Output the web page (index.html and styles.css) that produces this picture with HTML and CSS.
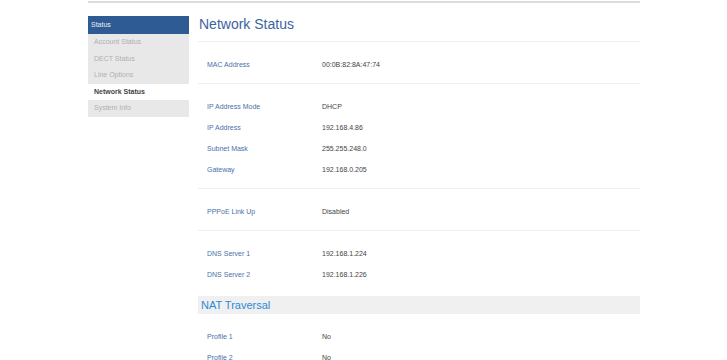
FILE: index.html
```html
<!DOCTYPE html>
<html lang="en">
<head>
  <meta charset="UTF-8" />
  <meta name="viewport" content="width=device-width, initial-scale=1.0" />
  <title>Network Status</title>
  <link rel="stylesheet" href="styles.css">
</head>
<body>
  <div class="page">
    <div class="menu">
      <div class="menu-head">Status</div>
      <div class="menu-item">Account Status</div>
      <div class="menu-item">DECT Status</div>
      <div class="menu-item">Line Options</div>
      <div class="menu-item active">Network Status</div>
      <div class="menu-item">System Info</div>
    </div>

    <div class="main">
      <h2>Network Status</h2>

      <div class="block">
        <div class="row"><span class="key">MAC Address</span><span class="val">00:0B:82:8A:47:74</span></div>
      </div>

      <div class="block">
        <div class="row"><span class="key">IP Address Mode</span><span class="val">DHCP</span></div>
        <div class="row"><span class="key">IP Address</span><span class="val">192.168.4.86</span></div>
        <div class="row"><span class="key">Subnet Mask</span><span class="val">255.255.248.0</span></div>
        <div class="row"><span class="key">Gateway</span><span class="val">192.168.0.205</span></div>
      </div>

      <div class="block">
        <div class="row"><span class="key">PPPoE Link Up</span><span class="val">Disabled</span></div>
      </div>

      <div class="block last">
        <div class="row"><span class="key">DNS Server 1</span><span class="val">192.168.1.224</span></div>
        <div class="row"><span class="key">DNS Server 2</span><span class="val">192.168.1.226</span></div>
      </div>

      <h3>NAT Traversal</h3>

      <div class="block plain">
        <div class="row"><span class="key">Profile 1</span><span class="val">No</span></div>
        <div class="row"><span class="key">Profile 2</span><span class="val">No</span></div>
        <div class="row"><span class="key">Profile 3</span><span class="val">No</span></div>
      </div>
    </div>
  </div>
</body>
</html>
```

FILE: styles.css
```css
body {
  margin: 0;
  font-family: "Liberation Sans", Arial, sans-serif;
  background: #fff;
  color: #444;
}
.page {
  width: 552px;
  margin: 1px 0 0 88px;
  border-top: 2px solid #dcdcdc;
  display: flex;
  gap: 9px;
  align-items: flex-start;
}
.menu {
  width: 101px;
  margin-top: 13px;
  font-size: 7px;
}
.menu-head {
  height: 18px;
  line-height: 18px;
  padding-left: 3px;
  background: #2f5b94;
  color: #e8eef6;
}
.menu-item {
  height: 16.5px;
  line-height: 16.5px;
  padding-left: 6px;
  background: #e8e8e8;
  color: #b0b0b0;
}
.menu-item.active {
  background: #fff;
  color: #444;
  font-weight: bold;
}
.main {
  flex: 1;
}
h2 {
  margin: 12px 0 0 1px;
  height: 26px;
  line-height: 18px;
  font-size: 14px;
  font-weight: normal;
  color: #3d64a0;
}
.block {
  border-top: 1px solid #efefef;
  padding: 12px 0 8px;
}
.block.last {
  padding-bottom: 11px;
}
.block.plain {
  border-top: none;
  padding-top: 12px;
}
.row {
  display: grid;
  grid-template-columns: 115px 1fr;
  height: 21px;
  line-height: 21px;
  padding-left: 9px;
  font-size: 7px;
}
.key {
  color: #4b70a8;
}
.val {
  color: #444;
}
h3 {
  margin: 0;
  height: 18px;
  line-height: 18px;
  padding-left: 3px;
  background: #f0f0f0;
  font-size: 11px;
  font-weight: normal;
  color: #2b8ad6;
}
```
